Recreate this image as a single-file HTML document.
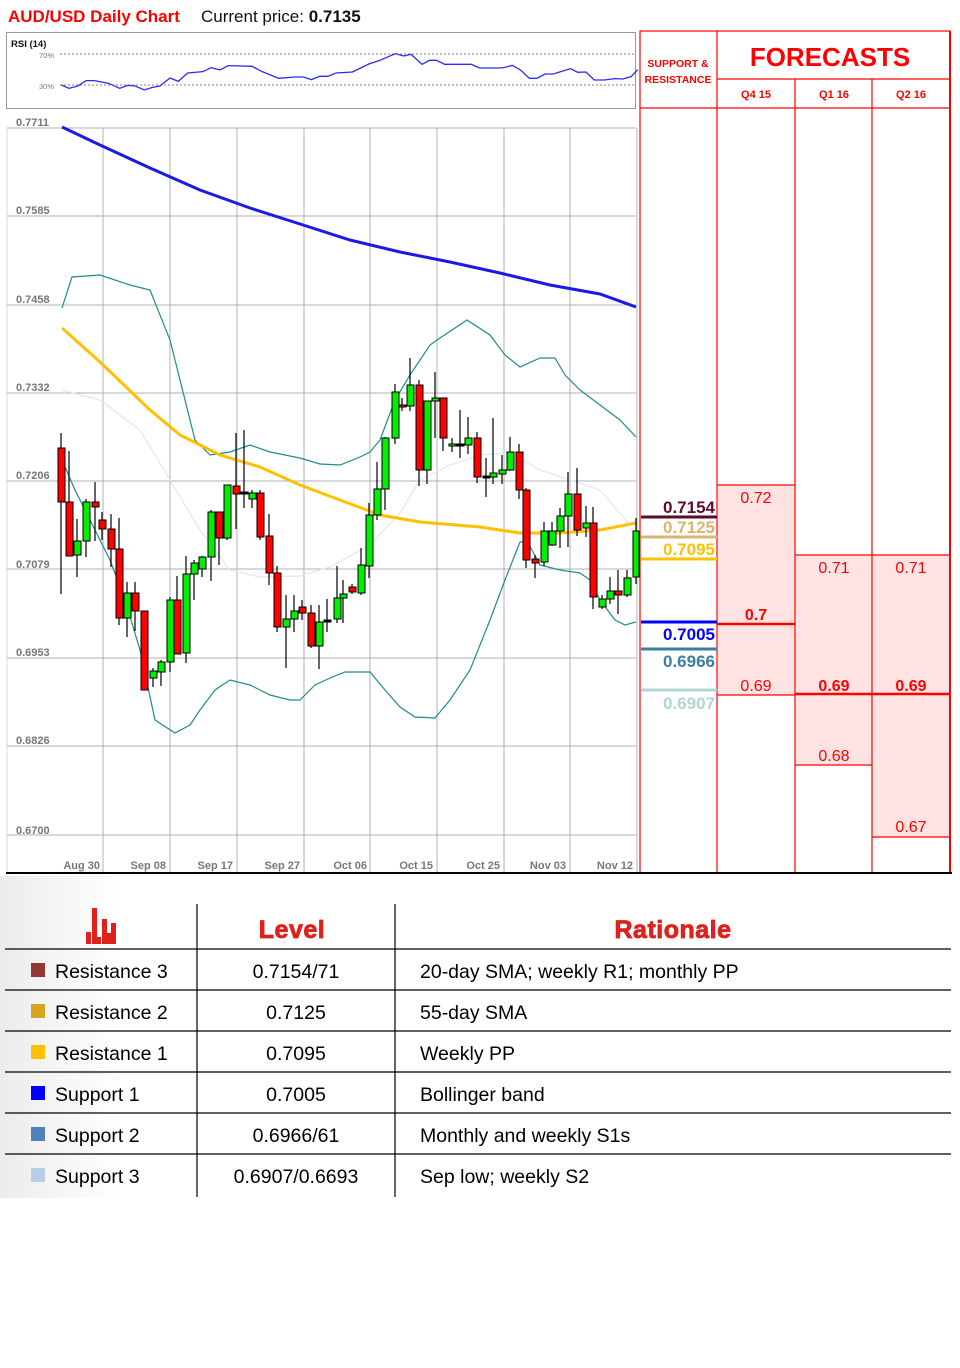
<!DOCTYPE html>
<html><head><meta charset="utf-8"><style>
body{margin:0;background:#fff;width:960px;height:1368px;overflow:hidden;font-family:"Liberation Sans",sans-serif}
svg text{font-family:"Liberation Sans",sans-serif}
</style></head><body>
<svg width="960" height="1368" viewBox="0 0 960 1368" style="position:absolute;left:0;top:0">
<defs><linearGradient id="bg" x1="0" x2="1" y1="0" y2="0"><stop offset="0" stop-color="#ececec"/><stop offset="0.3" stop-color="#ffffff"/></linearGradient></defs>
<text x="8" y="22" font-size="17" font-weight="bold" fill="#ff0000">AUD/USD Daily Chart</text>
<text x="201" y="22" font-size="17" fill="#111">Current price: <tspan font-weight="bold">0.7135</tspan></text>
<rect x="6.5" y="32.5" width="629" height="76" fill="#fff" stroke="#999"/>
<text x="11" y="47" font-size="9.5" font-weight="bold" fill="#111">RSI (14)</text>
<text x="39" y="58" font-size="7.5" fill="#777">70%</text>
<text x="39" y="89" font-size="7.5" fill="#777">30%</text>
<line x1="60" y1="54" x2="636" y2="54" stroke="#555" stroke-dasharray="2,2" stroke-width="0.8"/>
<line x1="60" y1="85" x2="636" y2="85" stroke="#555" stroke-dasharray="2,2" stroke-width="0.8"/>
<g transform="scale(0.4098,0.3333)"><polyline fill="none" stroke="#2a2aff" stroke-width="1.3" vector-effect="non-scaling-stroke" points="150,255 168,265 190,258 210,242 230,242 265,250 292,265 312,256 330,258 352,270 372,262 390,258 415,234 435,244 458,219 495,215 515,203 537,210 557,197 615,199 640,215 680,235 720,231 740,231 760,239 780,229 800,229 820,219 860,216 900,192 925,182 965,161 985,168 1003,163 1030,193 1048,181 1065,181 1085,193 1150,193 1170,204 1215,204 1230,203 1250,196 1270,210 1292,235 1310,235 1330,222 1350,222 1392,206 1410,217 1430,216 1450,240 1475,240 1500,236 1520,237 1540,230 1556,209"/></g>
<line x1="7" y1="128" x2="7" y2="873" stroke="#ddd"/>
<g stroke="#b0b0b0" stroke-width="1">
<line x1="7" y1="128" x2="636" y2="128"/><line x1="7" y1="216" x2="636" y2="216"/><line x1="7" y1="305" x2="636" y2="305"/><line x1="7" y1="393" x2="636" y2="393"/><line x1="7" y1="481" x2="636" y2="481"/><line x1="7" y1="569" x2="636" y2="569"/><line x1="7" y1="658" x2="636" y2="658"/><line x1="7" y1="746" x2="636" y2="746"/><line x1="7" y1="835" x2="636" y2="835"/>
<line x1="103" y1="128" x2="103" y2="873"/><line x1="170" y1="128" x2="170" y2="873"/><line x1="237" y1="128" x2="237" y2="873"/><line x1="304" y1="128" x2="304" y2="873"/><line x1="370" y1="128" x2="370" y2="873"/><line x1="437" y1="128" x2="437" y2="873"/><line x1="504" y1="128" x2="504" y2="873"/><line x1="570" y1="128" x2="570" y2="873"/><line x1="637" y1="128" x2="637" y2="873"/>
</g>
<g font-size="11" font-weight="bold" fill="#777">
<text x="16" y="126">0.7711</text><text x="16" y="214">0.7585</text><text x="16" y="303">0.7458</text><text x="16" y="391">0.7332</text><text x="16" y="479">0.7206</text><text x="16" y="568">0.7079</text><text x="16" y="656">0.6953</text><text x="16" y="744">0.6826</text><text x="16" y="834">0.6700</text>
<g text-anchor="end"><text x="100" y="869">Aug 30</text><text x="166" y="869">Sep 08</text><text x="233" y="869">Sep 17</text><text x="300" y="869">Sep 27</text><text x="367" y="869">Oct 06</text><text x="433" y="869">Oct 15</text><text x="500" y="869">Oct 25</text><text x="566" y="869">Nov 03</text><text x="633" y="869">Nov 12</text></g>
</g>
<polyline fill="none" stroke="#e6e6e6" stroke-width="1.2" points="62,390 100,400 140,430 170,480 200,530 230,570 260,577 300,576 330,567 370,545 400,513 420,480 450,465 480,455 510,453 540,470 570,480 600,490 630,525"/>
<polyline fill="none" stroke="#1e8c8c" stroke-width="1.2" points="62,308 72,277 100,275 130,285 150,290 170,340 185,400 195,440 210,455 230,452 250,445 270,452 300,458 320,464 340,465 360,457 370,452 380,440 395,400 410,375 430,345 437,340 467,320 490,335 505,355 520,367 540,358 555,358 565,375 580,390 600,405 620,420 636,437"/>
<polyline fill="none" stroke="#1e8c8c" stroke-width="1.2" points="62,460 75,490 90,520 110,560 125,600 140,650 155,720 175,733 190,725 200,710 215,690 230,680 250,685 270,695 290,700 300,700 315,685 330,678 345,672 370,672 385,690 400,707 415,717 435,718 450,700 470,670 490,620 505,580 520,542 527,541 540,565 560,570 580,573 590,580 600,600 615,620 625,625 636,622"/>
<polyline fill="none" stroke="#1a1ae6" stroke-width="3" points="62,127 100,145 150,168 200,190 250,208 300,224 350,240 400,252 450,262 500,273 550,285 600,294 636,307"/>
<polyline fill="none" stroke="#ffc000" stroke-width="3" points="62,328 100,362 150,410 180,435 220,455 260,467 300,485 340,500 380,515 420,522 480,527 520,533 560,533 600,530 636,523"/>
<g stroke="#000" stroke-width="1.2">
<path d="M61,433V594M69,451V556M77,519V577M86,499V557M95,482V541M102,512V540M111,514V567M119,518V625M127,582V637M135,582V631M144,611V690M153,668V687M161,660V686M170,597V672M177,576V654M186,556V663M194,560V600M202,556V577M211,510V581M219,512V565M227,485V540M236,433V529M244,430V508M252,490V508M260,490V540M269,514V585M277,566V632M286,595V668M294,595V632M302,600V620M311,605V648M319,605V669M327,599V632M337,566V623M343,580V623M352,584V594M361,548V595M369,503V578M377,462V520M385,437V510M395,384V444M402,398V411M410,358V411M419,380V486M427,401V484M435,372V438M443,398V451M452,438V452M460,410V458M468,417V454M477,432V483M486,458V497M493,418V484M502,455V484M510,437V471M519,444V499M526,488V568M535,555V578M544,522V566M552,522V546M560,508V548M568,472V547M577,468V536M586,506V537M593,507V609M602,595V609M610,577V604M618,570V614M627,570V597M636,518V584"/>
</g>
<g stroke="#000" stroke-width="1">
<rect x="58" y="448" width="7" height="54" fill="#f00"/><rect x="66" y="502" width="7" height="54" fill="#f00"/><rect x="74" y="541" width="7" height="14" fill="#0e0"/><rect x="83" y="502" width="7" height="39" fill="#0e0"/><rect x="92" y="502" width="7" height="5" fill="#f00"/><rect x="99" y="520" width="7" height="9" fill="#f00"/><rect x="108" y="529" width="7" height="20" fill="#f00"/><rect x="116" y="549" width="7" height="69" fill="#f00"/><rect x="124" y="593" width="7" height="25" fill="#0e0"/><rect x="132" y="593" width="7" height="18" fill="#f00"/><rect x="141" y="611" width="7" height="79" fill="#f00"/><rect x="150" y="671" width="7" height="7" fill="#0e0"/><rect x="158" y="662" width="7" height="10" fill="#0e0"/><rect x="167" y="600" width="7" height="62" fill="#0e0"/><rect x="174" y="600" width="7" height="54" fill="#f00"/><rect x="183" y="574" width="7" height="79" fill="#0e0"/><rect x="191" y="563" width="7" height="11" fill="#0e0"/><rect x="199" y="557" width="7" height="12" fill="#0e0"/><rect x="208" y="512" width="7" height="45" fill="#0e0"/><rect x="216" y="512" width="7" height="26" fill="#f00"/><rect x="224" y="485" width="7" height="53" fill="#0e0"/><rect x="233" y="486" width="7" height="8" fill="#f00"/><rect x="241" y="492" width="7" height="2" fill="#000"/><rect x="249" y="493" width="7" height="6" fill="#0e0"/><rect x="257" y="493" width="7" height="44" fill="#f00"/><rect x="266" y="536" width="7" height="37" fill="#f00"/><rect x="274" y="573" width="7" height="54" fill="#f00"/><rect x="283" y="619" width="7" height="8" fill="#0e0"/><rect x="291" y="611" width="7" height="8" fill="#0e0"/><rect x="299" y="607" width="7" height="6" fill="#f00"/><rect x="308" y="613" width="7" height="33" fill="#f00"/><rect x="316" y="622" width="7" height="24" fill="#0e0"/><rect x="324" y="620" width="7" height="2" fill="#000"/><rect x="334" y="598" width="7" height="21" fill="#0e0"/><rect x="340" y="594" width="7" height="4" fill="#0e0"/><rect x="349" y="587" width="7" height="5" fill="#f00"/><rect x="358" y="565" width="7" height="28" fill="#0e0"/><rect x="366" y="515" width="7" height="51" fill="#0e0"/><rect x="374" y="489" width="7" height="26" fill="#0e0"/><rect x="382" y="438" width="7" height="51" fill="#0e0"/><rect x="392" y="392" width="7" height="46" fill="#0e0"/><rect x="399" y="405" width="7" height="2" fill="#f00"/><rect x="407" y="385" width="7" height="21" fill="#0e0"/><rect x="416" y="385" width="7" height="85" fill="#f00"/><rect x="424" y="401" width="7" height="69" fill="#0e0"/><rect x="432" y="398" width="7" height="3" fill="#0e0"/><rect x="440" y="398" width="7" height="40" fill="#f00"/><rect x="449" y="444" width="7" height="2" fill="#0e0"/><rect x="457" y="444" width="7" height="2" fill="#000"/><rect x="465" y="438" width="7" height="7" fill="#0e0"/><rect x="474" y="438" width="7" height="39" fill="#f00"/><rect x="483" y="476" width="7" height="2" fill="#000"/><rect x="490" y="473" width="7" height="4" fill="#0e0"/><rect x="499" y="470" width="7" height="4" fill="#0e0"/><rect x="507" y="452" width="7" height="18" fill="#0e0"/><rect x="516" y="452" width="7" height="38" fill="#f00"/><rect x="523" y="490" width="7" height="70" fill="#f00"/><rect x="532" y="559" width="7" height="4" fill="#f00"/><rect x="541" y="531" width="7" height="31" fill="#0e0"/><rect x="549" y="531" width="7" height="14" fill="#0e0"/><rect x="557" y="516" width="7" height="15" fill="#0e0"/><rect x="565" y="494" width="7" height="22" fill="#0e0"/><rect x="574" y="494" width="7" height="36" fill="#f00"/><rect x="583" y="523" width="7" height="5" fill="#0e0"/><rect x="590" y="523" width="7" height="74" fill="#f00"/><rect x="599" y="599" width="7" height="8" fill="#0e0"/><rect x="607" y="591" width="7" height="8" fill="#0e0"/><rect x="615" y="591" width="7" height="4" fill="#f00"/><rect x="624" y="578" width="7" height="17" fill="#0e0"/><rect x="633" y="531" width="6" height="46" fill="#0e0"/>
</g>
<rect x="718" y="485" width="77" height="210" fill="#ffe3e3"/>
<rect x="795" y="555" width="77" height="210" fill="#ffe3e3"/>
<rect x="872" y="555" width="78" height="282" fill="#ffe3e3"/>
<g stroke="#f00" stroke-width="1.2" fill="none">
<rect x="640" y="31" width="310" height="842"/>
<line x1="717" y1="31" x2="717" y2="873"/><line x1="795" y1="79" x2="795" y2="873"/><line x1="872" y1="79" x2="872" y2="873"/>
<line x1="717" y1="79" x2="950" y2="79"/><line x1="640" y1="108" x2="950" y2="108"/>
<line x1="717" y1="485" x2="795" y2="485"/><line x1="717" y1="695" x2="795" y2="695"/>
<line x1="795" y1="555" x2="950" y2="555"/><line x1="795" y1="765" x2="872" y2="765"/><line x1="872" y1="837" x2="950" y2="837"/>
</g>
<line x1="950" y1="31" x2="950" y2="873" stroke="#f00" stroke-width="2"/>
<line x1="717" y1="624" x2="795" y2="624" stroke="#f00" stroke-width="2.5"/>
<line x1="795" y1="694" x2="950" y2="694" stroke="#f00" stroke-width="2.5"/>
<text x="678" y="67" font-size="10.5" font-weight="bold" fill="#f00" text-anchor="middle">SUPPORT &amp;</text>
<text x="678" y="83" font-size="10.5" font-weight="bold" fill="#f00" text-anchor="middle">RESISTANCE</text>
<text x="830" y="66" font-size="26" font-weight="bold" fill="#f00" text-anchor="middle">FORECASTS</text>
<g font-size="11" font-weight="bold" fill="#f00" text-anchor="middle"><text x="756" y="98">Q4 15</text><text x="834" y="98">Q1 16</text><text x="911" y="98">Q2 16</text></g>
<g font-size="16" fill="#f00" text-anchor="middle">
<text x="756" y="503">0.72</text><text x="756" y="620" font-weight="bold">0.7</text><text x="756" y="691">0.69</text>
<text x="834" y="573">0.71</text><text x="834" y="691" font-weight="bold">0.69</text><text x="834" y="761">0.68</text>
<text x="911" y="573">0.71</text><text x="911" y="691" font-weight="bold">0.69</text><text x="911" y="832">0.67</text>
</g>
<g stroke-width="3"><line x1="641" y1="517" x2="717" y2="517" stroke="#5c0a2e"/><line x1="641" y1="537" x2="717" y2="537" stroke="#d8b66e"/><line x1="641" y1="559" x2="717" y2="559" stroke="#ffc000"/><line x1="641" y1="622" x2="717" y2="622" stroke="#0000ff"/><line x1="641" y1="649" x2="717" y2="649" stroke="#3a7fa0"/><line x1="641" y1="690" x2="717" y2="690" stroke="#b0d5d5"/></g>
<g font-size="17" font-weight="bold" text-anchor="end">
<text x="715" y="513" fill="#5c0a2e">0.7154</text><text x="715" y="533" fill="#d8b66e">0.7125</text><text x="715" y="555" fill="#ffc000">0.7095</text><text x="715" y="640" fill="#0000ff">0.7005</text><text x="715" y="667" fill="#3a7fa0">0.6966</text><text x="715" y="709" fill="#b0d5d5">0.6907</text>
</g>
<line x1="6" y1="873" x2="952" y2="873" stroke="#000" stroke-width="2"/>
<rect x="0" y="876" width="400" height="322" fill="url(#bg)"/>
<g stroke="#000" stroke-width="1.2">
<line x1="197" y1="904" x2="197" y2="1197"/><line x1="395" y1="904" x2="395" y2="1197"/>
<line x1="5" y1="949" x2="951" y2="949"/><line x1="5" y1="990" x2="951" y2="990"/><line x1="5" y1="1031" x2="951" y2="1031"/><line x1="5" y1="1072" x2="951" y2="1072"/><line x1="5" y1="1113" x2="951" y2="1113"/><line x1="5" y1="1154" x2="951" y2="1154"/>
</g>
<g fill="#e0201a"><rect x="86" y="932" width="5" height="12"/><rect x="92" y="908" width="5" height="36"/><rect x="97" y="937" width="4" height="7"/><rect x="102" y="919" width="5" height="25"/><rect x="107" y="933" width="4" height="11"/><rect x="111" y="923" width="5" height="21"/></g>
<g font-size="25" font-weight="900" fill="#e0201a" text-anchor="middle" style="letter-spacing:0.5px"><text x="292" y="938" stroke="#e0201a" stroke-width="0.8">Level</text><text x="673" y="938" stroke="#e0201a" stroke-width="0.8">Rationale</text></g>
<g><rect x="31" y="963" width="14" height="14" fill="#953735"/><rect x="31" y="1004" width="14" height="14" fill="#d6a71e"/><rect x="31" y="1045" width="14" height="14" fill="#ffc000"/><rect x="31" y="1086" width="14" height="14" fill="#0000ff"/><rect x="31" y="1127" width="14" height="14" fill="#4f81bd"/><rect x="31" y="1168" width="14" height="14" fill="#b9cde5"/></g>
<g font-size="19.5" fill="#000">
<text x="55" y="978">Resistance 3</text><text x="55" y="1019">Resistance 2</text><text x="55" y="1060">Resistance 1</text><text x="55" y="1101">Support 1</text><text x="55" y="1142">Support 2</text><text x="55" y="1183">Support 3</text>
<g text-anchor="middle"><text x="296" y="978">0.7154/71</text><text x="296" y="1019">0.7125</text><text x="296" y="1060">0.7095</text><text x="296" y="1101">0.7005</text><text x="296" y="1142">0.6966/61</text><text x="296" y="1183">0.6907/0.6693</text></g>
<text x="420" y="978">20-day SMA; weekly R1; monthly PP</text><text x="420" y="1019">55-day SMA</text><text x="420" y="1060">Weekly PP</text><text x="420" y="1101">Bollinger band</text><text x="420" y="1142">Monthly and weekly S1s</text><text x="420" y="1183">Sep low; weekly S2</text>
</g>
</svg>
</body></html>
